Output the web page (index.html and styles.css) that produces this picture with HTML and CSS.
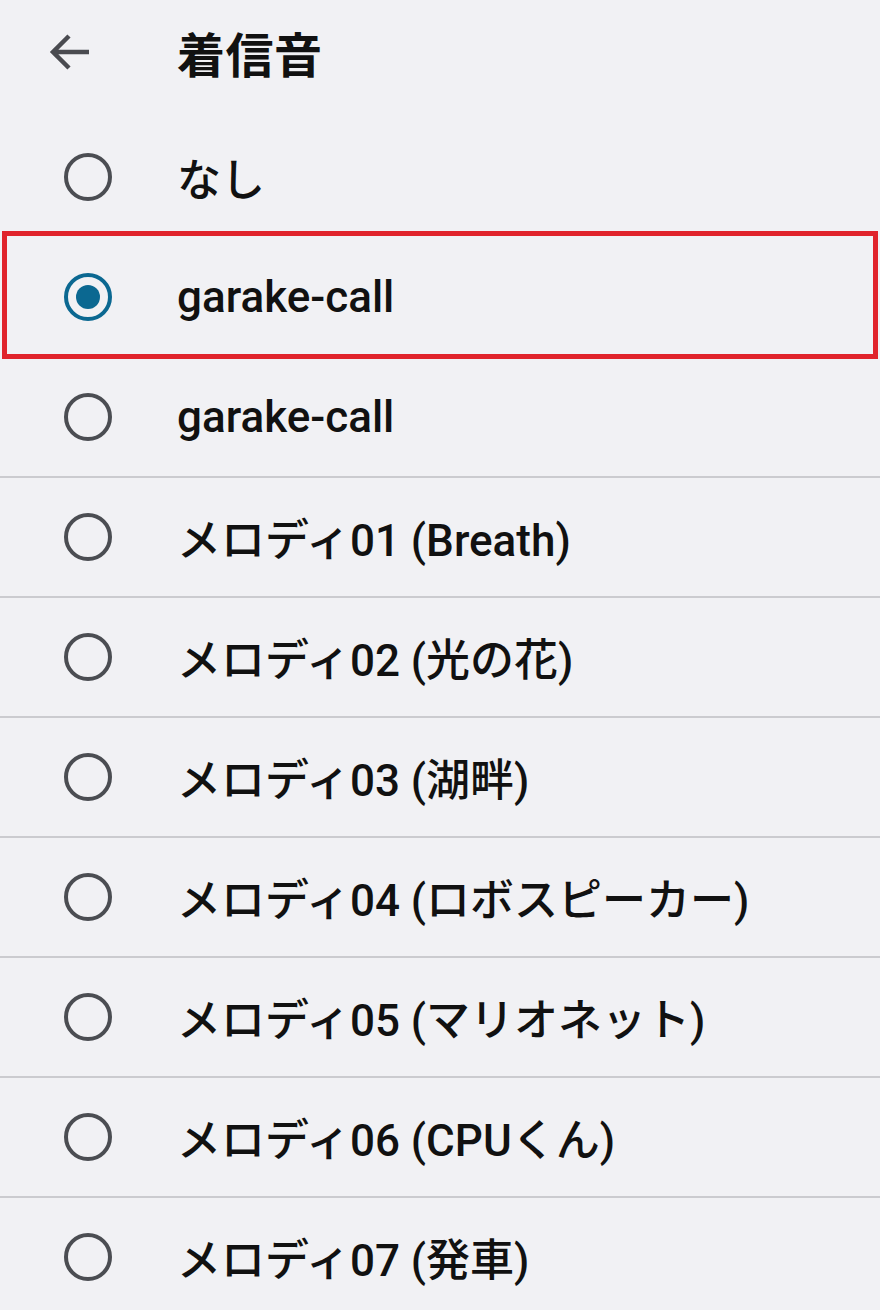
FILE: index.html
```html
<!DOCTYPE html>
<html lang="ja">
<head>
<meta charset="UTF-8">
<title>着信音</title>
<link rel="stylesheet" href="styles.css">
</head>
<body>
  <div class="cabecera">
    <svg class="volver" width="44" height="40" viewBox="0 0 44 40">
      <path d="M42 20 H6 M22 4 L6 20 L22 36" fill="none" stroke="#4a4b50" stroke-width="4.5"/>
    </svg>
    <h1>着信音</h1>
  </div>

  <div class="lista">
    <div class="fila"><span class="radio"></span><span class="texto">なし</span></div>
    <div class="fila marcada"><span class="radio activo"></span><span class="texto">garake-call</span></div>
    <div class="fila"><span class="radio"></span><span class="texto">garake-call</span></div>
    <div class="fila"><span class="radio"></span><span class="texto">メロディ01 (Breath)</span></div>
    <div class="fila"><span class="radio"></span><span class="texto">メロディ02 (光の花)</span></div>
    <div class="fila"><span class="radio"></span><span class="texto">メロディ03 (湖畔)</span></div>
    <div class="fila"><span class="radio"></span><span class="texto">メロディ04 (ロボスピーカー)</span></div>
    <div class="fila"><span class="radio"></span><span class="texto">メロディ05 (マリオネット)</span></div>
    <div class="fila"><span class="radio"></span><span class="texto">メロディ06 (CPUくん)</span></div>
    <div class="fila"><span class="radio"></span><span class="texto">メロディ07 (発車)</span></div>
  </div>
</body>
</html>
```

FILE: styles.css
```css
body {
  margin: 0;
  padding: 0;
  background-color: #f1f1f4;
  font-family: Roboto, "Noto Sans CJK JP", sans-serif;
  color: #111;
  overflow: hidden;
}

.cabecera {
  height: 118px;
  display: flex;
  align-items: center;
  padding-bottom: 14px;
  box-sizing: border-box;
}

.volver {
  margin-left: 47px;
  margin-right: 86px;
}

.cabecera h1 {
  margin: 0;
  font-family: "Noto Sans CJK JP", sans-serif;
  font-size: 48px;
  font-weight: 700;
  letter-spacing: 0.5px;
  color: #111;
}

.fila {
  position: relative;
  height: 120px;
  box-sizing: border-box;
  border-bottom: 2px solid #cbcbcf;
  display: flex;
  align-items: center;
}

.fila:first-child,
.fila:nth-child(2) {
  border-bottom-color: transparent;
}

.radio {
  width: 48px;
  height: 48px;
  box-sizing: border-box;
  border: 4px solid #4b4d52;
  border-radius: 50%;
  margin-left: 64px;
  margin-right: 65px;
  display: flex;
  align-items: center;
  justify-content: center;
}

.radio.activo {
  border-color: #0b6891;
}

.radio.activo::after {
  content: "";
  width: 24px;
  height: 24px;
  border-radius: 50%;
  background-color: #0b6891;
}

.texto {
  font-size: 44px;
  font-weight: 500;
}

.marcada::before {
  content: "";
  position: absolute;
  left: 2px;
  right: 2px;
  top: -7px;
  bottom: -3px;
  border: 5px solid #e0232b;
}
```
